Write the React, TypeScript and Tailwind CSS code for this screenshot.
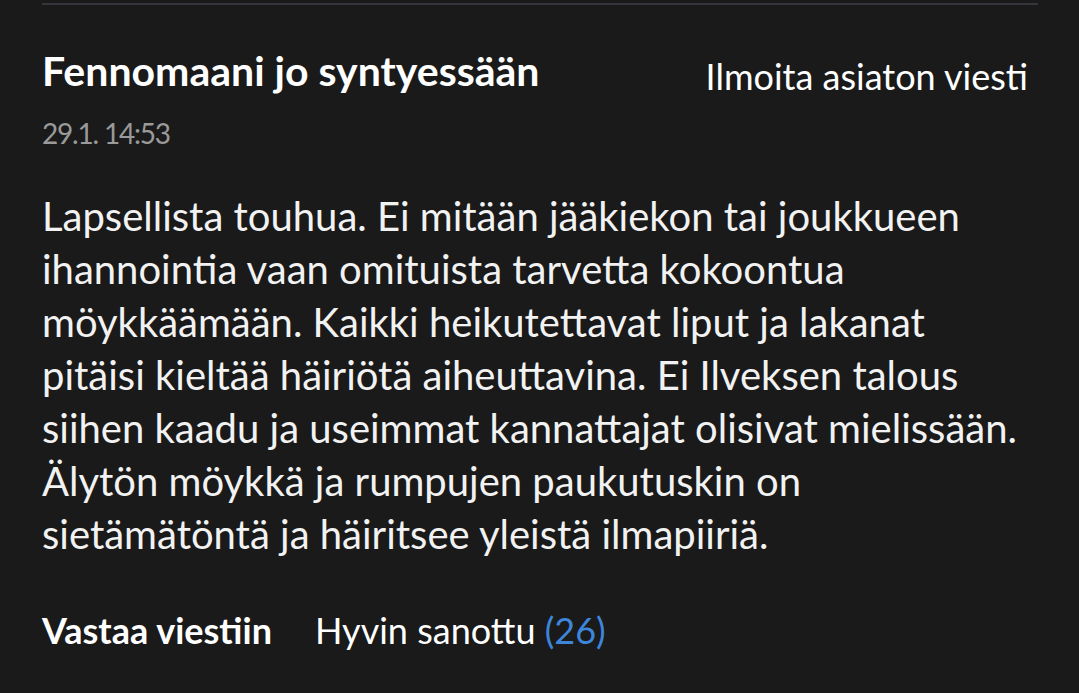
const bodyLines = [
  "Lapsellista touhua. Ei mitään jääkiekon tai joukkueen",
  "ihannointia vaan omituista tarvetta kokoontua",
  "möykkäämään. Kaikki heikutettavat liput ja lakanat",
  "pitäisi kieltää häiriötä aiheuttavina. Ei Ilveksen talous",
  "siihen kaadu ja useimmat kannattajat olisivat mielissään.",
  "Älytön möykkä ja rumpujen paukutuskin on",
  "sietämätöntä ja häiritsee yleistä ilmapiiriä.",
];

export default function App() {
  return (
    <div className="min-h-screen w-full bg-[#1a1a1a] font-['Lato',_sans-serif] text-white">
      <div className="pl-[42px] pr-[41px] pt-[3px]">
        <div className="h-[2px] bg-[#34363a]" />
        <div className="flex items-start justify-between pt-[44px]">
          <h2 className="text-[41px] font-bold leading-[44px]">Fennomaani jo syntyessään</h2>
          <button className="mr-[10px] mt-[5px] text-[36px] leading-[44px] text-white">
            Ilmoita asiaton viesti
          </button>
        </div>
        <p className="mt-[20px] text-[28px] leading-[30px] tracking-[-1.2px] text-[#9a9a9a]">29.1. 14:53</p>
        <p className="mt-[42px] whitespace-nowrap text-[40px] leading-[53px] text-[#f2f2f2]">
          {bodyLines.map((line, i) => (
            <span key={i} className="block">
              {line}
            </span>
          ))}
        </p>
        <div className="mt-[47px] flex items-center gap-[43px] text-[36px] leading-[44px]">
          <button className="font-bold">Vastaa viestiin</button>
          <button>
            Hyvin sanottu <span className="text-[#3d86dc]">(26)</span>
          </button>
        </div>
      </div>
    </div>
  );
}
